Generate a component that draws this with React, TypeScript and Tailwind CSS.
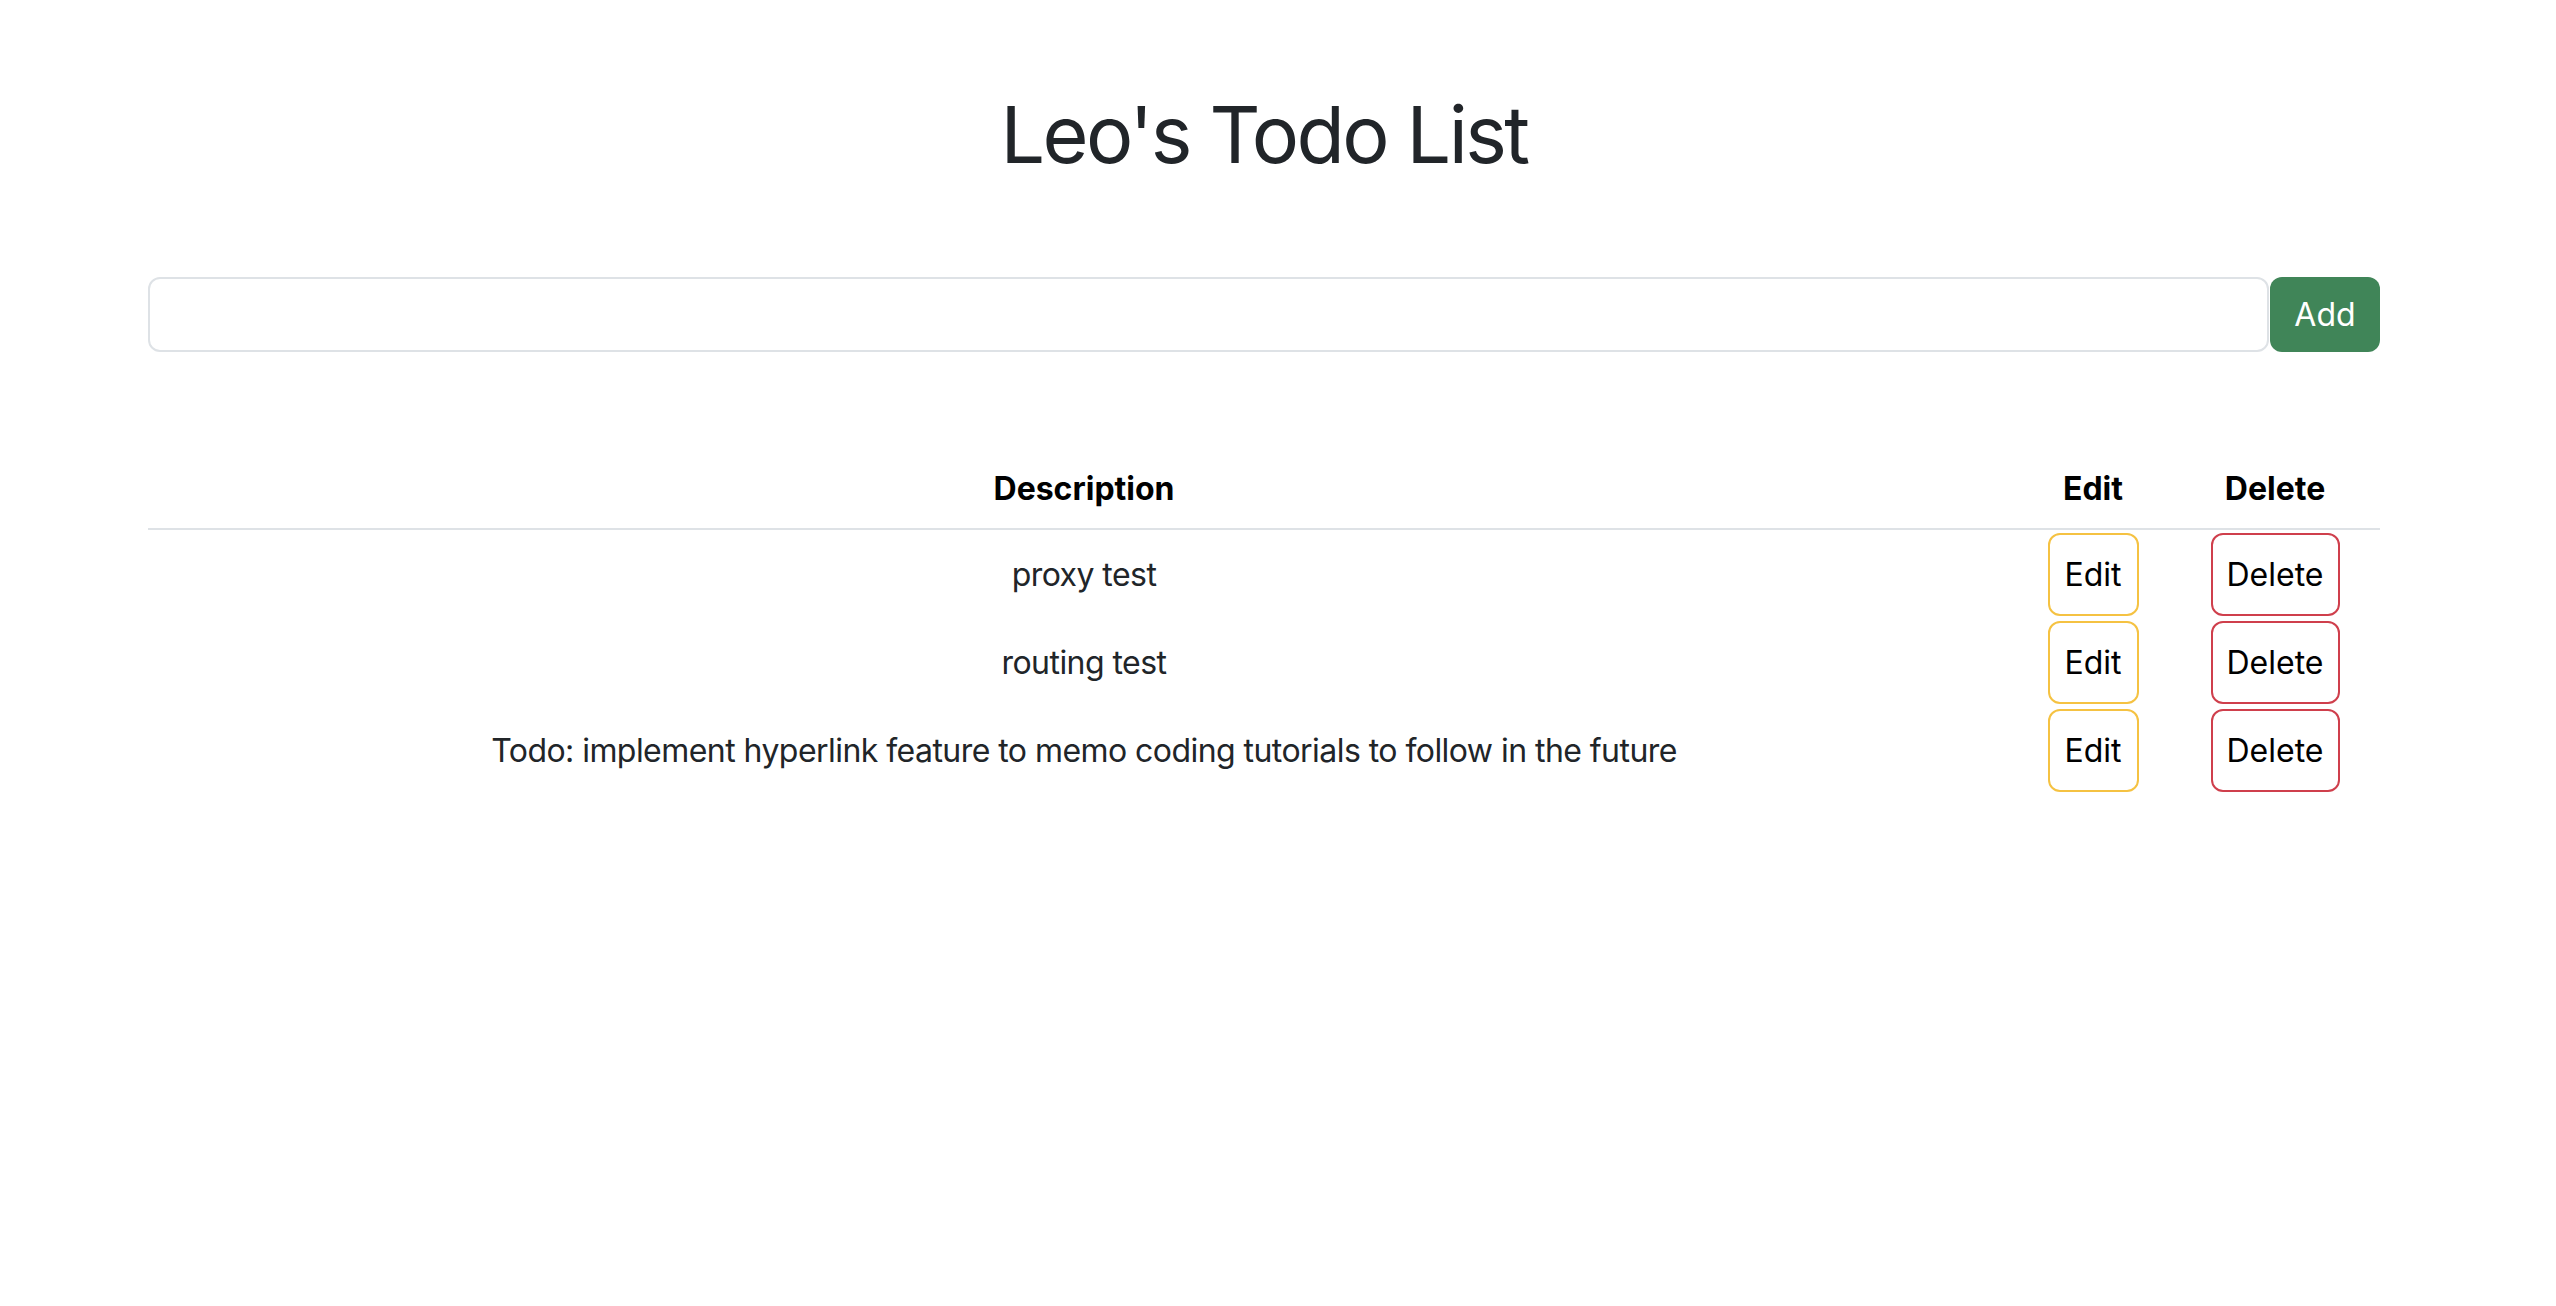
import { useState } from "react";

type Todo = { id: number; description: string };

export default function App() {
  const [input, setInput] = useState("");
  const [todos, setTodos] = useState<Todo[]>([
    { id: 1, description: "proxy test" },
    { id: 2, description: "routing test" },
    {
      id: 3,
      description:
        "Todo: implement hyperlink feature to memo coding tutorials to follow in the future",
    },
  ]);

  const addTodo = () => {
    if (!input.trim()) return;
    setTodos([...todos, { id: Date.now(), description: input }]);
    setInput("");
  };

  const deleteTodo = (id: number) => {
    setTodos(todos.filter((t) => t.id !== id));
  };

  return (
    <div className="min-h-screen bg-white font-['Inter',sans-serif] text-[#212529] pl-[148px] pr-[176px]">
      <h1 className="pt-[86px] text-center text-[79px] leading-[96px] font-normal tracking-[-2.6px]">
        Leo's Todo List
      </h1>

      <div className="mt-[95px] flex h-[75px]">
        <input
          className="flex-1 rounded-[12px] border-2 border-[#dee2e6] px-6 text-[32px] outline-none"
          value={input}
          onChange={(e) => setInput(e.target.value)}
        />
        <button
          className="ml-[1px] w-[110px] rounded-[12px] bg-[#408558] text-[32px] text-white"
          onClick={addTodo}
        >
          Add
        </button>
      </div>

      <div className="mt-[98px] text-[32px]">
        <div className="grid h-[80px] grid-cols-[1fr_154px_210px] items-center border-b-2 border-[#dee2e6] font-bold text-black">
          <div className="pl-[4px] text-center">Description</div>
          <div className="text-center">Edit</div>
          <div className="text-center">Delete</div>
        </div>
        {todos.map((todo) => (
          <div
            key={todo.id}
            className="grid h-[88px] grid-cols-[1fr_154px_210px] items-center"
          >
            <div className="pl-[4px] pt-[2px] text-center tracking-[-0.55px]">{todo.description}</div>
            <div className="flex justify-center">
              <button className="h-[83px] w-[91px] rounded-[12px] border-2 border-[#f5c242] pt-[2px] text-black">
                Edit
              </button>
            </div>
            <div className="flex justify-center">
              <button
                className="h-[83px] w-[129px] rounded-[12px] border-2 border-[#cf3f4c] pt-[2px] text-black"
                onClick={() => deleteTodo(todo.id)}
              >
                Delete
              </button>
            </div>
          </div>
        ))}
      </div>
    </div>
  );
}
